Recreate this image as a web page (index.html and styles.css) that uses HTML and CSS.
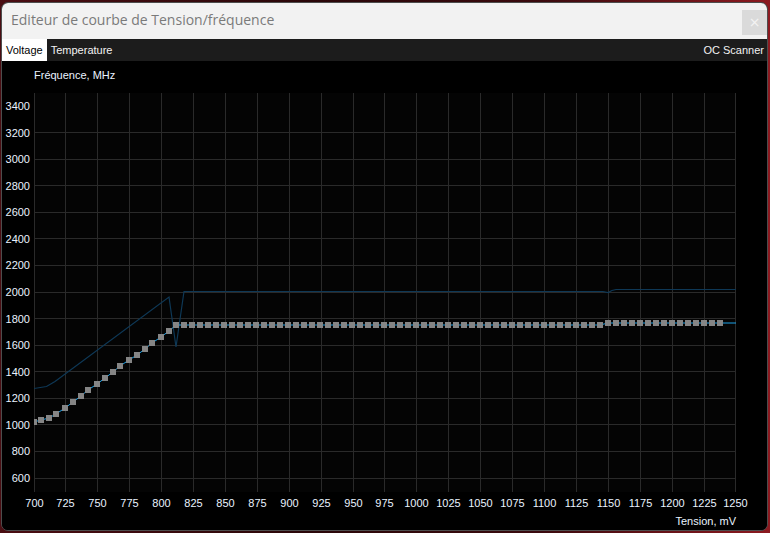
FILE: index.html
```html
<!DOCTYPE html>
<html lang="fr">
<head>
<meta charset="utf-8">
<title>Editeur de courbe de Tension/fréquence</title>
<link rel="stylesheet" href="styles.css">
</head>
<body>
<div class="window">
  <div class="titlebar">
    <span class="title">Editeur de courbe de Tension/fréquence</span>
    <span class="close">×</span>
  </div>
  <div class="tabs">
    <span class="tab active">Voltage</span>
    <span class="tab">Temperature</span>
    <span class="spacer"></span>
    <span class="tab">OC Scanner</span>
  </div>
  <div class="chart">
    <div class="y-title">Fréquence, MHz</div>
    <svg class="plot" width="765" height="420" viewBox="2 93 765 420" xmlns="http://www.w3.org/2000/svg">
      <defs>
        <clipPath id="area"><rect x="34" y="93" width="702" height="399"/></clipPath>
        <marker id="sq" markerWidth="6" markerHeight="6" refX="3" refY="3" markerUnits="userSpaceOnUse">
          <rect width="6" height="6" fill="#858585"/>
        </marker>
      </defs>
      <rect class="plot-bg" x="34" y="93" width="702" height="399"/>
      <g class="grid">
        <path d="M34.5 93V492M65.5 93V492M97.5 93V492M129.5 93V492M161.5 93V492M193.5 93V492M225.5 93V492M257.5 93V492M289.5 93V492M321.5 93V492M353.5 93V492M384.5 93V492M416.5 93V492M448.5 93V492M480.5 93V492M512.5 93V492M544.5 93V492M576.5 93V492M608.5 93V492M640.5 93V492M672.5 93V492M704.5 93V492M735.5 93V492"/>
        <path d="M34 478.5H736M34 451.5H736M34 424.5H736M34 398.5H736M34 371.5H736M34 345.5H736M34 318.5H736M34 292.5H736M34 265.5H736M34 238.5H736M34 212.5H736M34 185.5H736M34 159.5H736M34 132.5H736"/>
      </g>
      <g clip-path="url(#area)">
        <polyline class="default-curve" points="34,388.5 46.5,386.5 55,381.5 169,297 176,347 184,291.5 603,291.5 608,292.5 612,290.5 616,289.5 736,289.5"/>
        <polyline class="curve" points="720,323 736,323"/>
        <polyline class="curve pts" points="34,422 41,420 49,418 56,414 65,408 73,402 81,396 88,390 97,384 105,378 113,372 120,366 129,360 137,355 145,349 152,343 161,337 169,331 176,325 184,325 192,325 200,325 208,325 216,325 224,325 232,325 240,325 248,325 256,325 264,325 272,325 280,325 288,325 296,325 304,325 312,325 320,325 328,325 336,325 344,325 352,325 360,325 368,325 376,325 384,325 392,325 400,325 408,325 416,325 424,325 432,325 440,325 448,325 456,325 464,325 472,325 480,325 488,325 496,325 504,325 512,325 520,325 528,325 536,325 544,325 552,325 560,325 568,325 576,325 584,325 592,325 600,325 608,323 616,323 624,323 632,323 640,323 648,323 656,323 664,323 672,323 680,323 688,323 696,323 704,323 712,323 720,323"/>
      </g>
      <g class="ylabels">
        <text x="30" y="106">3400</text>
        <text x="30" y="132.6">3200</text>
        <text x="30" y="159.1">3000</text>
        <text x="30" y="185.7">2800</text>
        <text x="30" y="212.3">2600</text>
        <text x="30" y="238.9">2400</text>
        <text x="30" y="265.4">2200</text>
        <text x="30" y="292">2000</text>
        <text x="30" y="318.6">1800</text>
        <text x="30" y="345.1">1600</text>
        <text x="30" y="371.7">1400</text>
        <text x="30" y="398.3">1200</text>
        <text x="30" y="424.9">1000</text>
        <text x="30" y="451.4">800</text>
        <text x="30" y="478">600</text>
      </g>
      <g class="xlabels">
        <text x="34.5" y="503">700</text>
        <text x="65.5" y="503">725</text>
        <text x="97.5" y="503">750</text>
        <text x="129.5" y="503">775</text>
        <text x="161.5" y="503">800</text>
        <text x="193.5" y="503">825</text>
        <text x="225.5" y="503">850</text>
        <text x="257.5" y="503">875</text>
        <text x="289.5" y="503">900</text>
        <text x="321.5" y="503">925</text>
        <text x="353.5" y="503">950</text>
        <text x="384.5" y="503">975</text>
        <text x="416.5" y="503">1000</text>
        <text x="448.5" y="503">1025</text>
        <text x="480.5" y="503">1050</text>
        <text x="512.5" y="503">1075</text>
        <text x="544.5" y="503">1100</text>
        <text x="576.5" y="503">1125</text>
        <text x="608.5" y="503">1150</text>
        <text x="640.5" y="503">1175</text>
        <text x="672.5" y="503">1200</text>
        <text x="704.5" y="503">1225</text>
        <text x="735.5" y="503">1250</text>
      </g>
    </svg>
    <div class="x-title">Tension, mV</div>
  </div>
</div>
</body>
</html>
```

FILE: styles.css
```css
html, body {
  margin: 0;
  padding: 0;
}
body {
  width: 770px;
  height: 533px;
  overflow: hidden;
  background: linear-gradient(90deg, #4a0d12 0%, #2a0709 40%, #3a0a0e 70%, #8c1a20 100%);
  font-family: "Liberation Sans", Arial, sans-serif;
}
.window {
  margin: 2px 2px 0 1px;
  width: 765px;
  height: 527px;
  border: 1px solid #4d4d4d;
  border-radius: 7px;
  overflow: hidden;
  display: flex;
  flex-direction: column;
  background: #000;
}
.titlebar {
  height: 36px;
  background: #f2f2f2;
  display: flex;
  align-items: flex-start;
  justify-content: space-between;
}
.title {
  font-family: "Open Sans", "Noto Sans", sans-serif;
  font-size: 14px;
  color: #7a7a7a;
  margin-left: 9px;
  margin-top: 7px;
  line-height: 20px;
}
.close {
  width: 25px;
  height: 25px;
  margin-top: 7px;
  background: #dadada;
  color: #f3f3f3;
  font-size: 14px;
  line-height: 25px;
  text-align: center;
  font-family: "DejaVu Sans", sans-serif;
}
.tabs {
  height: 22px;
  background: #1c1c1c;
  display: flex;
  align-items: stretch;
  font-size: 11px;
  color: #f2f2f2;
}
.tab {
  padding: 0 4px;
  line-height: 22px;
}
.tab:last-child {
  padding-right: 3px;
}
.tab.active {
  background: #fff;
  color: #000;
}
.spacer {
  flex: 1;
}
.chart {
  flex: 1;
  display: flex;
  flex-direction: column;
  background: #000;
  color: #eaf3ff;
  font-size: 11px;
}
.y-title {
  height: 32px;
  line-height: 28px;
  padding-left: 32px;
}
.plot {
  display: block;
}
.plot-bg {
  fill: #040404;
}
.grid path {
  stroke: #2a2a2a;
  stroke-width: 1;
  fill: none;
}
.default-curve {
  fill: none;
  stroke: #0e3856;
  stroke-width: 1.2;
}
.curve {
  fill: none;
  stroke: #1ca2e8;
  stroke-width: 1;
}
.pts {
  marker-start: url(#sq);
  marker-mid: url(#sq);
  marker-end: url(#sq);
}
.ylabels text,
.xlabels text {
  font-family: "Liberation Sans", Arial, sans-serif;
  font-size: 11px;
  fill: #eaf3ff;
  dominant-baseline: central;
}
.ylabels text {
  text-anchor: end;
}
.xlabels text {
  text-anchor: middle;
}
.x-title {
  flex: 1;
  text-align: right;
  padding-right: 31px;
  line-height: 16px;
}
```
